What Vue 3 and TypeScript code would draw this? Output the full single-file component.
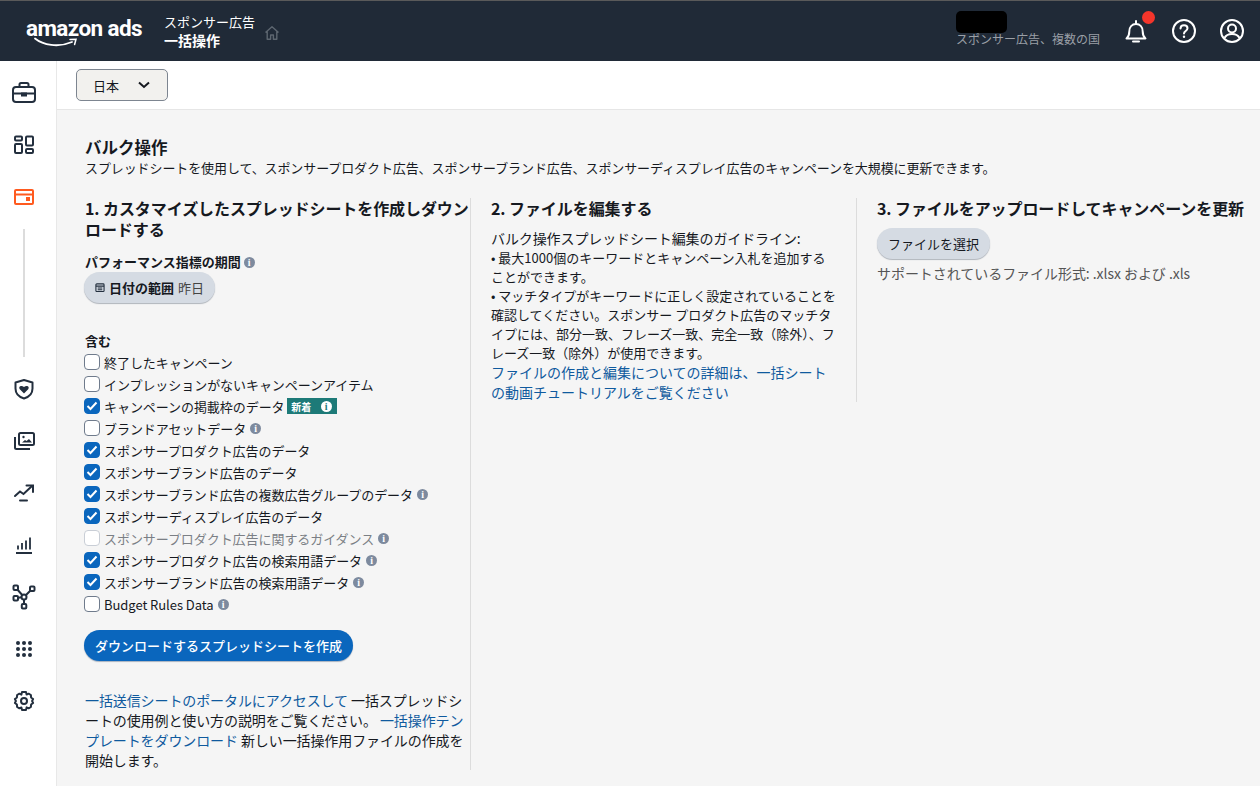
<script setup lang="ts">
import { ref } from "vue";

const rows = ref([
  { label: "終了したキャンペーン", checked: false },
  { label: "インプレッションがないキャンペーンアイテム", checked: false },
  { label: "キャンペーンの掲載枠のデータ", checked: true, isNew: true },
  { label: "ブランドアセットデータ", checked: false, info: true },
  { label: "スポンサープロダクト広告のデータ", checked: true },
  { label: "スポンサーブランド広告のデータ", checked: true },
  { label: "スポンサーブランド広告の複数広告グループのデータ", checked: true, info: true },
  { label: "スポンサーディスプレイ広告のデータ", checked: true },
  { label: "スポンサープロダクト広告に関するガイダンス", checked: false, info: true, disabled: true },
  { label: "スポンサープロダクト広告の検索用語データ", checked: true, info: true },
  { label: "スポンサーブランド広告の検索用語データ", checked: true, info: true },
  { label: "Budget Rules Data", checked: false, info: true },
]);
</script>

<template>
  <div class="page">
    <header class="topbar">
      <div class="logo">
        <span class="logo-text">amazon ads</span>
        <svg class="swoosh" width="46" height="12" viewBox="0 0 46 12" fill="none">
          <path d="M1 1.500C9 8 24 11 38 5" stroke="#fff" stroke-width="1.800" stroke-linecap="round" />
          <path d="M36 2.500L42 2.200L40.600 7.500" stroke="#fff" stroke-width="1.500" stroke-linecap="round" />
        </svg>
      </div>
      <div class="crumbs">
        <div>スポンサー広告</div>
        <div class="crumb-strong">一括操作</div>
      </div>
      <svg class="home" width="16" height="16" viewBox="0 0 16 16" fill="none">
        <path d="M1.500 7.500L8 1.800l6.500 5.700M3.200 6.500V14.200h3.400V10h2.800v4.200h3.400V6.500" stroke="#5d6670" stroke-width="1.400" stroke-linejoin="round" />
      </svg>
      <div class="account">
        <div class="redacted"></div>
        <div class="account-text">スポンサー広告、複数の国</div>
      </div>
      <div class="top-icons">
        <div class="bell-wrap">
          <svg width="24" height="24" viewBox="0 0 24 24" fill="none" stroke="#fff" stroke-width="2">
            <path d="M2.500 19.500c2-1.600 2.800-3.500 2.800-7 0-4.500 2.700-7.500 6.700-7.500s6.700 3 6.700 7.500c0 3.500.8 5.400 2.800 7z" stroke-linejoin="round" />
            <path d="M12 2v2.500M9 22.500h6" stroke-linecap="round" />
          </svg>
          <span class="dot"></span>
        </div>
        <svg width="26" height="26" viewBox="0 0 26 26" fill="none" stroke="#fff" stroke-width="2">
          <circle cx="13" cy="13" r="11" />
          <path d="M9.500 10.500c0-2 1.500-3.300 3.500-3.300s3.500 1.300 3.500 3.100c0 2.800-3.500 2.600-3.500 5.200" stroke-linecap="round" />
          <circle cx="13" cy="18.800" r="1.200" fill="#fff" stroke="none" />
        </svg>
        <svg width="26" height="26" viewBox="0 0 26 26" fill="none" stroke="#fff" stroke-width="2">
          <circle cx="13" cy="13" r="11" />
          <circle cx="13" cy="10.500" r="4" />
          <path d="M5.500 20c1.500-3 4-4 7.500-4s6 1 7.500 4" />
        </svg>
      </div>
    </header>

    <div class="body">
      <nav class="sidebar">
        <div class="slot">
          <svg width="26" height="24" viewBox="0 0 26 24" fill="none" stroke="#232f3e" stroke-width="2">
            <rect x="2" y="6" width="22" height="15" rx="3" />
            <path d="M8.500 6V3.500A1.500 1.500 0 0 1 10 2h6a1.500 1.500 0 0 1 1.500 1.500V6M2 12.500h22" />
            <path d="M11 12.500h4v2h-4z" fill="#232f3e" />
          </svg>
        </div>
        <div class="slot">
          <svg width="22" height="20" viewBox="0 0 22 20" fill="none" stroke="#232f3e" stroke-width="2">
            <rect x="2" y="1.500" width="7" height="4" rx="1" />
            <rect x="2" y="9" width="7" height="9" rx="1" />
            <rect x="13" y="1.500" width="7" height="9" rx="1" />
            <rect x="13" y="14" width="7" height="4" rx="1" />
          </svg>
        </div>
        <div class="slot">
          <svg width="22" height="18" viewBox="0 0 22 18" fill="none" stroke="#ff5a1f" stroke-width="2">
            <rect x="2" y="2" width="18" height="14" rx="1" />
            <path d="M2 6.500h18" />
            <rect x="13" y="9" width="4" height="4" fill="#ff5a1f" stroke="none" />
          </svg>
        </div>
        <div class="nav-line"></div>
        <div class="slot">
          <svg width="22" height="22" viewBox="0 0 22 22" fill="none" stroke="#232f3e" stroke-width="2">
            <path d="M11 2l8.500 2.500v6c0 5-3.500 8.500-8.500 10-5-1.500-8.500-5-8.500-10v-6z" stroke-linejoin="round" />
            <path d="M11 15.500L6.800 11.200c-1.700-2 1-4.500 4.200-2.200 3.200-2.300 5.900.2 4.200 2.200z" fill="#232f3e" stroke="none" />
          </svg>
        </div>
        <div class="slot">
          <svg width="22" height="20" viewBox="0 0 22 20" fill="none" stroke="#232f3e" stroke-width="2">
            <rect x="6" y="2" width="15" height="12" rx="1.500" />
            <path d="M2 6v10.500A1.500 1.500 0 0 0 3.500 18H17" />
            <circle cx="10.500" cy="6" r="1.200" fill="#232f3e" stroke="none" />
            <path d="M9 11.500h10l-3-3.500-2.500 2-1.500-1z" fill="#232f3e" stroke="none" />
          </svg>
        </div>
        <div class="slot">
          <svg width="22" height="20" viewBox="0 0 22 20" fill="none" stroke="#232f3e" stroke-width="2" stroke-linecap="round">
            <path d="M2 13l5-4.500 3.500 2.500L19 3" />
            <path d="M13.500 2.500H20V9" />
            <path d="M7 17.500h7" />
          </svg>
        </div>
        <div class="slot">
          <svg width="20" height="20" viewBox="0 0 20 20" fill="none" stroke="#232f3e" stroke-width="2">
            <path d="M2 18h16" />
            <path d="M4 10.500v4M8 8v6.500M12 5.500v9M16 2.500v12" stroke-width="1.800" />
          </svg>
        </div>
        <div class="slot">
          <svg width="26" height="26" viewBox="0 0 26 26" fill="none" stroke="#232f3e" stroke-width="2">
            <path d="M5 4l8 9 8-8M13 13v9M5 14l8-1" />
            <rect x="2.500" y="1.500" width="4.500" height="4.500" rx="1" fill="#fff" />
            <rect x="19" y="2.500" width="4.500" height="4.500" rx="1" fill="#fff" />
            <rect x="2.500" y="12" width="4.500" height="4.500" rx="1" fill="#fff" />
            <rect x="10.800" y="20" width="4.500" height="4.500" rx="1" fill="#fff" />
            <circle cx="13" cy="13" r="2.500" fill="#fff" />
          </svg>
        </div>
        <div class="slot">
          <svg width="18" height="18" viewBox="0 0 18 18" fill="#232f3e">
            <circle cx="3" cy="3" r="2" /><circle cx="9" cy="3" r="2" /><circle cx="15" cy="3" r="2" />
            <circle cx="3" cy="9" r="2" /><circle cx="9" cy="9" r="2" /><circle cx="15" cy="9" r="2" />
            <circle cx="3" cy="15" r="2" /><circle cx="9" cy="15" r="2" /><circle cx="15" cy="15" r="2" />
          </svg>
        </div>
        <div class="slot">
          <svg width="22" height="22" viewBox="0 0 22 22" fill="none" stroke="#232f3e" stroke-width="2" stroke-linejoin="round">
            <circle cx="11" cy="11" r="3" />
            <path d="M9 2h4l.6 2.600 2-.9 2.300 1.300.2 2.500 2 1.500-1 2 1 2-2 1.500-.2 2.500-2.300 1.300-2-.9L13 20H9l-.6-2.600-2 .9-2.300-1.300-.2-2.500-2-1.500 1-2-1-2 2-1.500.2-2.500 2.300-1.300 2 .9z" />
          </svg>
        </div>
      </nav>

      <main class="main">
        <div class="subbar">
          <button class="country">
            <span>日本</span>
            <svg width="12" height="8" viewBox="0 0 12 8" fill="none" stroke="#16191f" stroke-width="2">
              <path d="M1 1.500l5 4.500 5-4.500" />
            </svg>
          </button>
        </div>

        <section class="content">
          <h1>バルク操作</h1>
          <p class="lead">スプレッドシートを使用して、スポンサープロダクト広告、スポンサーブランド広告、スポンサーディスプレイ広告のキャンペーンを大規模に更新できます。</p>

          <div class="columns">
            <div class="col col-one">
              <h2>1. カスタマイズしたスプレッドシートを作成しダウンロードする</h2>
              <div class="field-label">パフォーマンス指標の期間 <span class="info">i</span></div>
              <button class="date-btn">
                <svg width="11" height="11" viewBox="0 0 11 11" fill="none" stroke="#232f3e" stroke-width="1.200">
                  <rect x="1" y="1.500" width="9" height="8.500" rx="1" />
                  <path d="M1 4h9M3 6h5M3 8h5" />
                </svg>
                <b>日付の範囲</b> <span class="date-val">昨日</span>
              </button>

              <div class="include-label">含む</div>
              <div class="checks">
                <label v-for="r in rows" :key="r.label" class="check-row" :class="{ disabled: r.disabled }">
                  <span class="box" :class="{ on: r.checked }">
                    <svg v-if="r.checked" width="12" height="10" viewBox="0 0 12 10" fill="none" stroke="#fff" stroke-width="2">
                      <path d="M1.500 5l3 3 6-6.500" />
                    </svg>
                  </span>
                  <span>{{ r.label }}</span>
                  <span v-if="r.isNew" class="new-tag"><span class="new-text">新着</span><span class="new-info">i</span></span>
                  <span v-if="r.info" class="info">i</span>
                </label>
              </div>

              <button class="primary">ダウンロードするスプレッドシートを作成</button>

              <p class="foot">
                <a>一括送信シートのポータルにアクセスして</a> 一括スプレッドシートの使用例と使い方の説明をご覧ください。 <a>一括操作テンプレートをダウンロード</a> 新しい一括操作用ファイルの作成を開始します。
              </p>
            </div>

            <div class="col col-two">
              <h2>2. ファイルを編集する</h2>
              <div class="guide">
                <div class="guide-title">バルク操作スプレッドシート編集のガイドライン:</div>
                <div>• 最大1000個のキーワードとキャンペーン入札を追加することができます。</div>
                <div>• マッチタイプがキーワードに正しく設定されていることを確認してください。スポンサー プロダクト広告のマッチタイプには、部分一致、フレーズ一致、完全一致（除外）、フレーズ一致（除外）が使用できます。</div>
                <a>ファイルの作成と編集についての詳細は、一括シートの動画チュートリアルをご覧ください</a>
              </div>
            </div>

            <div class="col col-three">
              <h2>3. ファイルをアップロードしてキャンペーンを更新</h2>
              <button class="file-btn">ファイルを選択</button>
              <div class="formats">サポートされているファイル形式: .xlsx および .xls</div>
            </div>
          </div>
        </section>
      </main>
    </div>
  </div>
</template>

<style>
html,
body {
  margin: 0;
  background: #f5f5f5;
}
</style>

<style scoped>
.page {
  width: 1260px;
  height: 786px;
  overflow: hidden;
  display: flex;
  flex-direction: column;
  font-family: "Noto Sans CJK JP", "Noto Sans", sans-serif;
  color: #16191f;
  background: #f5f5f5;
}

.topbar {
  height: 60px;
  flex-shrink: 0;
  border-top: 1px solid #5a5a5a;
  background: #202a37;
  display: flex;
  align-items: center;
  padding: 0 15px 0 26px;
  color: #fff;
}

.logo {
  position: relative;
  width: 116px;
  height: 40px;
}

.logo-text {
  font-family: Roboto, "Liberation Sans", sans-serif;
  font-size: 22.500px;
  font-weight: 700;
  letter-spacing: -0.600px;
  line-height: 34px;
  white-space: nowrap;
}

.swoosh {
  position: absolute;
  left: 8px;
  top: 26px;
}

.crumbs {
  margin-left: 22px;
  font-size: 13px;
  line-height: 19px;
}

.crumb-strong {
  font-size: 14px;
  font-weight: 700;
}

.home {
  margin: 3px 0 0 9px;
}

.account {
  margin-left: auto;
  margin-right: 24px;
  align-self: flex-start;
  padding-top: 10px;
}

.redacted {
  width: 51px;
  height: 22px;
  background: #000;
  border-radius: 5px;
  margin-bottom: -3px;
}

.account-text {
  font-size: 12px;
  line-height: 18px;
  color: #9a9fa6;
  white-space: nowrap;
}

.top-icons {
  display: flex;
  align-items: center;
  gap: 22px;
}

.bell-wrap {
  position: relative;
  display: flex;
  margin-right: 1px;
}

.dot {
  position: absolute;
  top: -8px;
  right: -7px;
  width: 13px;
  height: 13px;
  border-radius: 50%;
  background: #f4352b;
}

.body {
  flex: 1;
  display: flex;
  min-height: 0;
}

.sidebar {
  width: 57px;
  flex-shrink: 0;
  background: #fff;
  border-right: 1px solid #e8e8e8;
  box-sizing: border-box;
  display: flex;
  flex-direction: column;
  align-items: center;
  padding: 6px 8px 0 0;
}

.slot {
  height: 52px;
  display: flex;
  align-items: center;
  justify-content: center;
}

.nav-line {
  width: 2px;
  height: 128px;
  flex-shrink: 0;
  background: #dcdcdc;
  margin: 6px 0;
}

.main {
  flex: 1;
  min-width: 0;
}

.subbar {
  height: 49px;
  box-sizing: border-box;
  background: #fff;
  border-bottom: 1px solid #e6e6e6;
  padding: 8px 19px;
}

.country {
  width: 92px;
  height: 32px;
  box-sizing: border-box;
  border: 1px solid #7d8590;
  border-radius: 5px;
  background: #f2f1ee;
  display: flex;
  align-items: center;
  justify-content: space-between;
  padding: 0 17px 0 16px;
  font: inherit;
  font-size: 13px;
  color: #16191f;
}

.content {
  padding: 26px 0 0 28px;
}

h1 {
  margin: 0;
  font-size: 16.500px;
  line-height: 22px;
  font-weight: 700;
}

.lead {
  margin: 0;
  font-size: 13px;
  line-height: 20px;
  letter-spacing: -0.100px;
  white-space: nowrap;
}

.columns {
  display: flex;
  margin-top: 20px;
}

.col {
  box-sizing: border-box;
}

.col-one {
  width: 386px;
  border-right: 1px solid #dcdcdc;
  height: 572px;
}

.col-two {
  width: 386px;
  padding: 0 20px;
  border-right: 1px solid #dcdcdc;
  height: 204px;
}

.col-three {
  padding-left: 20px;
}

h2 {
  margin: 0;
  font-size: 16px;
  line-height: 21px;
  letter-spacing: -0.080px;
  font-weight: 700;
}

.field-label {
  margin-top: 13px;
  font-size: 13px;
  line-height: 18px;
  font-weight: 700;
  display: flex;
  align-items: center;
  gap: 3px;
}

.info {
  display: inline-flex;
  align-items: center;
  justify-content: center;
  width: 11px;
  height: 11px;
  border-radius: 50%;
  background: #7d8a9e;
  color: #fff;
  font-family: "Liberation Serif", serif;
  font-weight: 700;
  font-size: 10px;
  line-height: 11px;
}

.date-btn {
  margin: 1px 0 0 -1px;
  height: 31px;
  width: 131px;
  border: 0;
  border-radius: 16px;
  background: #d5dbe3;
  box-shadow: 0 1px 1px #b0b5bc;
  display: flex;
  align-items: center;
  gap: 4px;
  padding: 0 11px;
  font: inherit;
  font-size: 13px;
  color: #16191f;
  white-space: nowrap;
}

.date-val {
  color: #444;
}

.include-label {
  margin-top: 29px;
  font-size: 13px;
  line-height: 18px;
  font-weight: 700;
}

.checks {
  margin-top: 1px;
}

.check-row {
  height: 22px;
  display: flex;
  align-items: center;
  gap: 4px;
  font-size: 13px;
  letter-spacing: -0.060px;
  margin-left: -1px;
  white-space: nowrap;
}

.check-row.disabled {
  color: #7b7f85;
}

.check-row.disabled .box {
  border-color: #c9ced6;
}

.box {
  width: 16px;
  height: 16px;
  box-sizing: border-box;
  border: 1px solid #6f7b8c;
  border-radius: 4px;
  background: #fff;
  display: inline-flex;
  align-items: center;
  justify-content: center;
}

.box.on {
  background: #0a66bd;
  border-color: #0a66bd;
}

.new-tag {
  width: 50px;
  height: 16px;
  background: #1d7a78;
  color: #fff;
  font-size: 10px;
  font-weight: 700;
  display: inline-flex;
  align-items: center;
  justify-content: space-around;
  margin-left: -2px;
}

.new-info {
  width: 11px;
  height: 11px;
  border-radius: 50%;
  background: #fff;
  color: #1d7a78;
  font-family: "Liberation Serif", serif;
  font-size: 10px;
  line-height: 11px;
  text-align: center;
}

.primary {
  margin: 15px 0 0 -1px;
  width: 269px;
  height: 31px;
  border: 0;
  border-radius: 16px;
  background: #0a66bd;
  color: #fff;
  font: inherit;
  font-size: 13px;
  font-weight: 500;
  box-shadow: 0 1px 1px #a8b2bf;
  white-space: nowrap;
}

.foot {
  margin: 29px 0 0;
  padding-right: 1px;
  font-size: 14px;
  line-height: 20px;
  letter-spacing: -0.100px;
}

a {
  color: #0f5a9e;
}

.guide {
  margin-top: 9px;
  font-size: 13px;
  line-height: 19px;
}

.guide-title {
  font-size: 14px;
  line-height: 20px;
  letter-spacing: -0.100px;
}

.guide a {
  display: block;
  font-size: 14px;
  line-height: 20px;
}

.file-btn {
  margin-top: 9px;
  height: 31px;
  width: 113px;
  border: 0;
  border-radius: 16px;
  background: #d5dbe3;
  font: inherit;
  font-size: 13px;
  color: #16191f;
  box-shadow: 0 1px 1px #b0b5bc;
}

.formats {
  margin-top: 4px;
  font-size: 14px;
  line-height: 20px;
  letter-spacing: -0.050px;
  color: #555;
  white-space: nowrap;
}
</style>
